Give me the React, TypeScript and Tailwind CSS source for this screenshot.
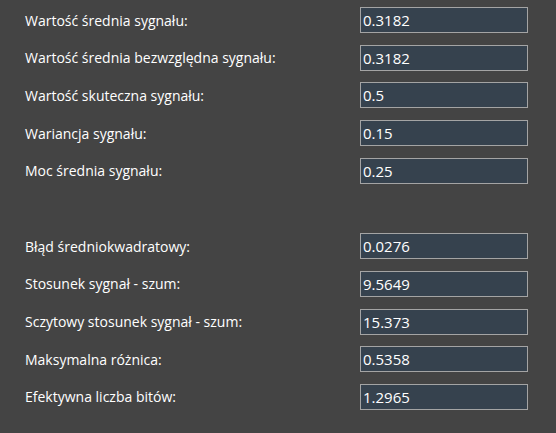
import React from "react";

const FIRST = [
  { label: "Wartość średnia sygnału:", value: "0.3182" },
  { label: "Wartość średnia bezwzględna sygnału:", value: "0.3182" },
  { label: "Wartość skuteczna sygnału:", value: "0.5" },
  { label: "Wariancja sygnału:", value: "0.15" },
  { label: "Moc średnia sygnału:", value: "0.25" },
];

const SECOND = [
  { label: "Błąd średniokwadratowy:", value: "0.0276" },
  { label: "Stosunek sygnał - szum:", value: "9.5649" },
  { label: "Sczytowy stosunek sygnał - szum:", value: "15.373" },
  { label: "Maksymalna różnica:", value: "0.5358" },
  { label: "Efektywna liczba bitów:", value: "1.2965" },
];

function Row({ label, value }: { label: string; value: string }) {
  return (
    <div className="grid h-[26px] grid-cols-[335px_168px] items-center">
      <span className="text-white">{label}</span>
      <input
        readOnly
        value={value}
        className="h-[26px] w-[168px] border border-[#a4a4a4] bg-[#36424e] px-[2px] text-[15px] text-white outline-none"
      />
    </div>
  );
}

export default function App() {
  return (
    <div
      className="flex h-[433px] w-[556px] flex-col gap-[11.7px] bg-[#444444] pl-[25px] pt-[7px] text-[14px]"
      style={{ fontFamily: '"Open Sans", "Noto Sans", sans-serif' }}
    >
      {FIRST.map((r) => (
        <Row key={r.label} {...r} />
      ))}
      <div className="h-[26px]" />
      {SECOND.map((r) => (
        <Row key={r.label} {...r} />
      ))}
    </div>
  );
}
